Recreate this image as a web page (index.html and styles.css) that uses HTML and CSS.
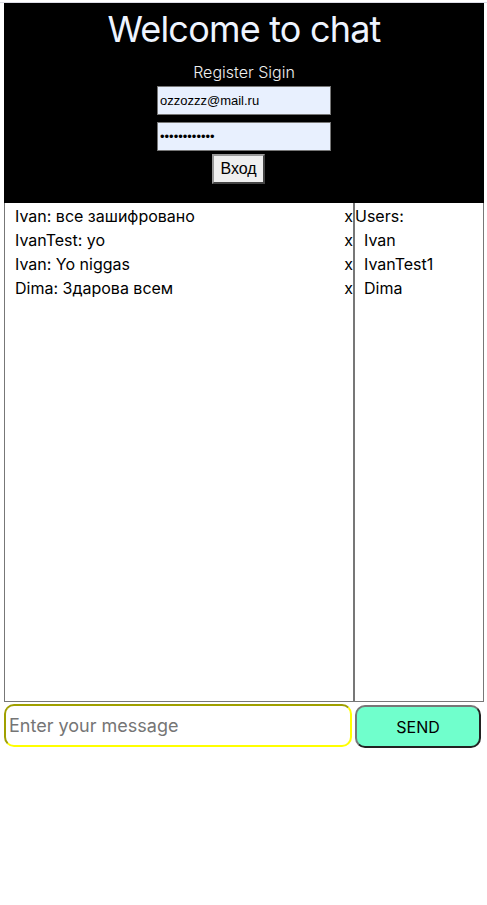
FILE: index.html
```html
<!DOCTYPE html>
<html lang="ru">
<head>
    <meta charset="UTF-8">
    <meta name="viewport" content="width=device-width, initial-scale=1.0">
    <title>Chat</title>
    <link rel="stylesheet" href="styles.css">
</head>
<body>
    <div class="app">
        <!-- Login header -->
        <header class="header">
            <h1>Welcome to chat</h1>
            <div class="links">Register Sigin</div>
            <form class="login-form">
                <input type="email" class="login-input" value="ozzozzz@mail.ru">
                <input type="password" class="login-input" value="123456789012">
                <button type="button" class="login-btn">Вход</button>
            </form>
        </header>

        <!-- Chat area -->
        <div class="chat">
            <div class="messages">
                <div class="message"><span>Ivan: все зашифровано</span><span class="remove">x</span></div>
                <div class="message"><span>IvanTest: yo</span><span class="remove">x</span></div>
                <div class="message"><span>Ivan: Yo niggas</span><span class="remove">x</span></div>
                <div class="message"><span>Dima: Здарова всем</span><span class="remove">x</span></div>
            </div>
            <div class="users">
                <div class="users-title">Users:</div>
                <div class="user">Ivan</div>
                <div class="user">IvanTest1</div>
                <div class="user">Dima</div>
            </div>
        </div>

        <div class="send-row">
            <input type="text" class="message-input" placeholder="Enter your message">
            <button type="button" class="send-btn">SEND</button>
        </div>
    </div>
</body>
</html>
```

FILE: styles.css
```css
body {
    margin: 2px 0 0 0;
    border-top: 1px solid #dcdce6;
    font-family: 'Inter', 'Noto Sans', sans-serif;
    color: #000;
    background: #fff;
}

.app {
    padding: 0 3px 0 4px;
}

/* Header */
.header {
    background: #000;
    height: 200px;
    display: flex;
    flex-direction: column;
    align-items: center;
    box-sizing: border-box;
    padding-top: 6px;
}

.header h1 {
    margin: 0;
    font-size: 36px;
    letter-spacing: -0.8px;
    font-weight: 400;
    color: #eef4ff;
    line-height: 40px;
}

.links {
    margin-top: 14px;
    font-size: 16px;
    color: #eee;
    font-weight: 300;
    line-height: 18px;
}

.login-form {
    margin-top: 5px;
    display: flex;
    flex-direction: column;
    align-items: center;
    gap: 7px;
}

.login-input {
    width: 174px;
    height: 29px;
    box-sizing: border-box;
    margin: 0;
    padding: 0 2px;
    border: 1px solid #767676;
    background: #e8f0fe;
    font-family: 'Liberation Sans', Arial, sans-serif;
    font-size: 13px;
    color: #000;
}

.login-btn {
    margin: -4px 11px 0 0;
    width: 53px;
    height: 30px;
    box-sizing: border-box;
    background: #efefef;
    border: 2px solid #767676;
    border-color: #999 #444 #444 #999;
    font-family: 'Liberation Sans', Arial, sans-serif;
    font-size: 16px;
    padding: 0;
    color: #000;
}

/* Chat */
.chat {
    display: flex;
    height: 499px;
}

.messages {
    width: 350px;
    box-sizing: border-box;
    border: 1px solid #777;
    border-top: none;
    padding: 1px 0 0 10px;
}

.message {
    display: flex;
    justify-content: space-between;
    font-size: 16px;
    line-height: 24px;
}

.users {
    width: 130px;
    box-sizing: border-box;
    border: 1px solid #777;
    border-top: none;
    padding-top: 1px;
    font-size: 16px;
    line-height: 24px;
}

.user {
    padding-left: 9px;
}

/* Send row */
.send-row {
    display: flex;
    align-items: flex-start;
    margin-top: 2px;
}

.message-input {
    width: 348px;
    height: 43px;
    box-sizing: border-box;
    margin: 0;
    border: 2px solid #ffff00;
    border-color: #a0a000 #ffff00 #ffff00 #a0a000;
    border-radius: 10px;
    padding: 0 3px;
    font-family: 'Inter', 'Noto Sans', sans-serif;
    font-size: 18px;
    outline: none;
}

.message-input::placeholder {
    color: #757575;
}

.send-btn {
    margin: 1px 0 0 3px;
    width: 126px;
    height: 43px;
    box-sizing: border-box;
    background: #70ffcc;
    border: 2px solid #666;
    border-color: #777 #222 #222 #777;
    border-radius: 10px;
    font-family: 'Inter', 'Noto Sans', sans-serif;
    font-size: 16px;
    color: #000;
}
```
